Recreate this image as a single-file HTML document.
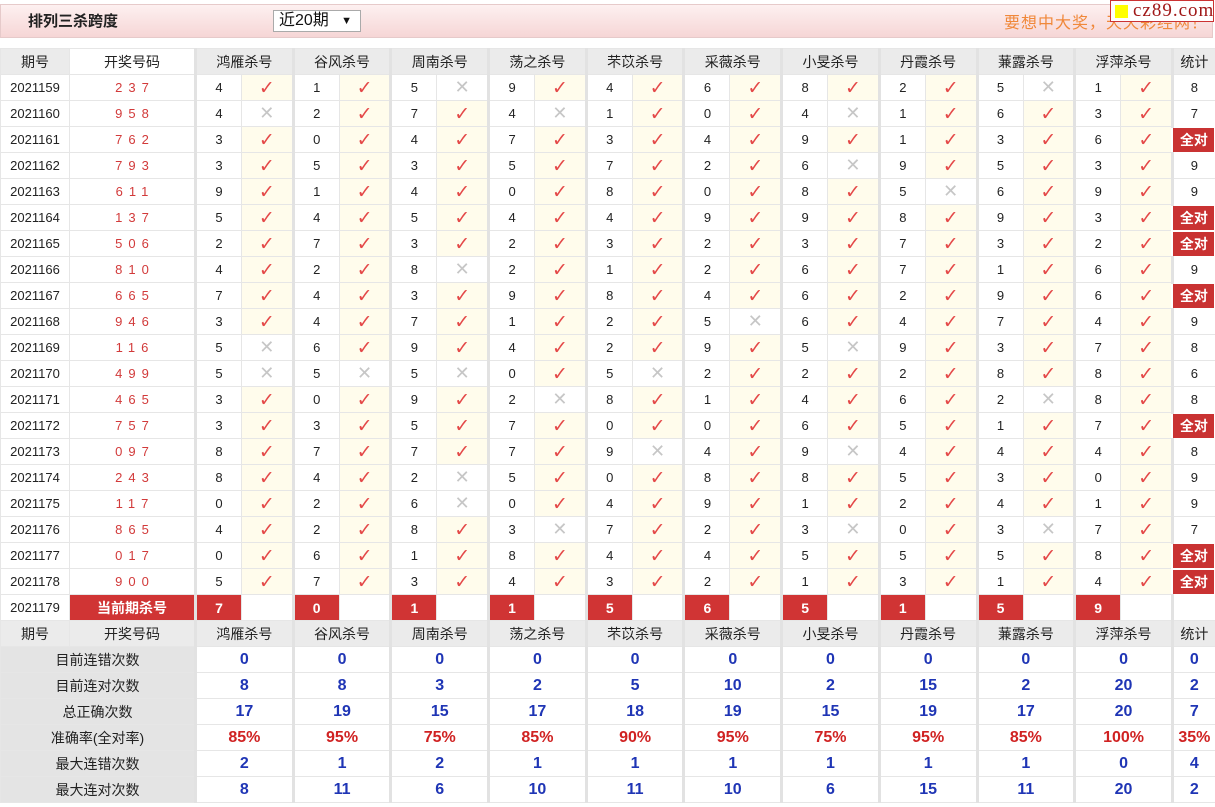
<!DOCTYPE html>
<html><head><meta charset="utf-8">
<style>
*{margin:0;padding:0;box-sizing:border-box}
body{width:1215px;height:807px;background:#fff;font-family:"Liberation Sans","Noto Sans CJK SC",sans-serif;position:relative;overflow:hidden}
.bar{position:absolute;left:0;top:4px;width:1213px;height:34px;background:linear-gradient(#fdf0f0,#f6d6d6);border:1px solid #e6caca}
.title{position:absolute;left:27px;top:5px;font-size:15px;font-weight:bold;color:#222}
.sel{position:absolute;left:272px;top:5px;width:88px;height:22px;background:#fff;border:1px solid #aaa;font-size:16px;padding-left:5px;line-height:20px;color:#111}
.sel span{position:absolute;right:8px;font-size:11px}
.slogan{position:absolute;right:4px;top:4px;color:#f0883a;font-size:16px;letter-spacing:1px}
.logo{position:absolute;left:1110px;top:0;width:104px;height:22px;background:#fff;border:1px solid #c33;font-family:"Liberation Serif",serif;font-size:19px;color:#a01818;line-height:20px;padding-left:22px;letter-spacing:1px}
.logo i{position:absolute;left:4px;top:4px;width:13px;height:13px;background:#ff0}
table{position:absolute;left:0;top:48px;width:1215px;border-collapse:collapse;table-layout:fixed;font-size:13px}
td{height:26px;border:1px solid #e6e6e6;text-align:center;color:#222;padding:0;white-space:nowrap}
tr.h td{background:#ebebeb;font-size:14px;color:#222}
td.g{border-left:3px solid #e2e2e2}
td.k{color:#d23a3a;letter-spacing:6px;padding-left:6px}
td.y{background:#fffcec;color:#e44848;font-family:"DejaVu Sans",sans-serif;font-size:19px;line-height:20px}
td.x{background:#fff;color:#c6c6c6;font-family:"DejaVu Sans",sans-serif;font-size:18px}
td.a{background:#c93232;color:#fff;font-size:14px;font-weight:bold;border:2px solid #fff}
td.r{background:#d03434;color:#fff;font-weight:bold;font-size:14px}
tr.s td{font-weight:bold;color:#1f35b5;font-size:16px}
tr.s td.l{background:#e4e4e4;color:#222;font-weight:normal;font-size:14px}
tr.p td{color:#d02222}
</style></head><body>
<div class="bar"><div class="title">排列三杀跨度</div><div class="sel">近20期<span>▼</span></div><div class="slogan">要想中大奖，天天彩经网！</div></div>
<div class="logo"><i></i>cz89.com</div>
<table>
<colgroup><col style="width:69px"><col style="width:126px">
<col style="width:46px"><col style="width:51.7px"><col style="width:46px"><col style="width:51.7px"><col style="width:46px"><col style="width:51.7px"><col style="width:46px"><col style="width:51.7px"><col style="width:46px"><col style="width:51.7px"><col style="width:46px"><col style="width:51.7px"><col style="width:46px"><col style="width:51.7px"><col style="width:46px"><col style="width:51.7px"><col style="width:46px"><col style="width:51.7px"><col style="width:46px"><col style="width:51.7px">
<col style="width:43px"></colgroup>
<tr class="h"><td>期号</td><td style="background:#fff">开奖号码</td><td class="g" colspan="2">鸿雁杀号</td><td class="g" colspan="2">谷风杀号</td><td class="g" colspan="2">周南杀号</td><td class="g" colspan="2">荡之杀号</td><td class="g" colspan="2">芣苡杀号</td><td class="g" colspan="2">采薇杀号</td><td class="g" colspan="2">小旻杀号</td><td class="g" colspan="2">丹霞杀号</td><td class="g" colspan="2">蒹露杀号</td><td class="g" colspan="2">浮萍杀号</td><td class="g">统计</td></tr>
<tr><td>2021159</td><td class="k">237</td><td class="g">4</td><td class="y">✓</td><td class="g">1</td><td class="y">✓</td><td class="g">5</td><td class="x">✕</td><td class="g">9</td><td class="y">✓</td><td class="g">4</td><td class="y">✓</td><td class="g">6</td><td class="y">✓</td><td class="g">8</td><td class="y">✓</td><td class="g">2</td><td class="y">✓</td><td class="g">5</td><td class="x">✕</td><td class="g">1</td><td class="y">✓</td><td class="g">8</td></tr>
<tr><td>2021160</td><td class="k">958</td><td class="g">4</td><td class="x">✕</td><td class="g">2</td><td class="y">✓</td><td class="g">7</td><td class="y">✓</td><td class="g">4</td><td class="x">✕</td><td class="g">1</td><td class="y">✓</td><td class="g">0</td><td class="y">✓</td><td class="g">4</td><td class="x">✕</td><td class="g">1</td><td class="y">✓</td><td class="g">6</td><td class="y">✓</td><td class="g">3</td><td class="y">✓</td><td class="g">7</td></tr>
<tr><td>2021161</td><td class="k">762</td><td class="g">3</td><td class="y">✓</td><td class="g">0</td><td class="y">✓</td><td class="g">4</td><td class="y">✓</td><td class="g">7</td><td class="y">✓</td><td class="g">3</td><td class="y">✓</td><td class="g">4</td><td class="y">✓</td><td class="g">9</td><td class="y">✓</td><td class="g">1</td><td class="y">✓</td><td class="g">3</td><td class="y">✓</td><td class="g">6</td><td class="y">✓</td><td class="a">全对</td></tr>
<tr><td>2021162</td><td class="k">793</td><td class="g">3</td><td class="y">✓</td><td class="g">5</td><td class="y">✓</td><td class="g">3</td><td class="y">✓</td><td class="g">5</td><td class="y">✓</td><td class="g">7</td><td class="y">✓</td><td class="g">2</td><td class="y">✓</td><td class="g">6</td><td class="x">✕</td><td class="g">9</td><td class="y">✓</td><td class="g">5</td><td class="y">✓</td><td class="g">3</td><td class="y">✓</td><td class="g">9</td></tr>
<tr><td>2021163</td><td class="k">611</td><td class="g">9</td><td class="y">✓</td><td class="g">1</td><td class="y">✓</td><td class="g">4</td><td class="y">✓</td><td class="g">0</td><td class="y">✓</td><td class="g">8</td><td class="y">✓</td><td class="g">0</td><td class="y">✓</td><td class="g">8</td><td class="y">✓</td><td class="g">5</td><td class="x">✕</td><td class="g">6</td><td class="y">✓</td><td class="g">9</td><td class="y">✓</td><td class="g">9</td></tr>
<tr><td>2021164</td><td class="k">137</td><td class="g">5</td><td class="y">✓</td><td class="g">4</td><td class="y">✓</td><td class="g">5</td><td class="y">✓</td><td class="g">4</td><td class="y">✓</td><td class="g">4</td><td class="y">✓</td><td class="g">9</td><td class="y">✓</td><td class="g">9</td><td class="y">✓</td><td class="g">8</td><td class="y">✓</td><td class="g">9</td><td class="y">✓</td><td class="g">3</td><td class="y">✓</td><td class="a">全对</td></tr>
<tr><td>2021165</td><td class="k">506</td><td class="g">2</td><td class="y">✓</td><td class="g">7</td><td class="y">✓</td><td class="g">3</td><td class="y">✓</td><td class="g">2</td><td class="y">✓</td><td class="g">3</td><td class="y">✓</td><td class="g">2</td><td class="y">✓</td><td class="g">3</td><td class="y">✓</td><td class="g">7</td><td class="y">✓</td><td class="g">3</td><td class="y">✓</td><td class="g">2</td><td class="y">✓</td><td class="a">全对</td></tr>
<tr><td>2021166</td><td class="k">810</td><td class="g">4</td><td class="y">✓</td><td class="g">2</td><td class="y">✓</td><td class="g">8</td><td class="x">✕</td><td class="g">2</td><td class="y">✓</td><td class="g">1</td><td class="y">✓</td><td class="g">2</td><td class="y">✓</td><td class="g">6</td><td class="y">✓</td><td class="g">7</td><td class="y">✓</td><td class="g">1</td><td class="y">✓</td><td class="g">6</td><td class="y">✓</td><td class="g">9</td></tr>
<tr><td>2021167</td><td class="k">665</td><td class="g">7</td><td class="y">✓</td><td class="g">4</td><td class="y">✓</td><td class="g">3</td><td class="y">✓</td><td class="g">9</td><td class="y">✓</td><td class="g">8</td><td class="y">✓</td><td class="g">4</td><td class="y">✓</td><td class="g">6</td><td class="y">✓</td><td class="g">2</td><td class="y">✓</td><td class="g">9</td><td class="y">✓</td><td class="g">6</td><td class="y">✓</td><td class="a">全对</td></tr>
<tr><td>2021168</td><td class="k">946</td><td class="g">3</td><td class="y">✓</td><td class="g">4</td><td class="y">✓</td><td class="g">7</td><td class="y">✓</td><td class="g">1</td><td class="y">✓</td><td class="g">2</td><td class="y">✓</td><td class="g">5</td><td class="x">✕</td><td class="g">6</td><td class="y">✓</td><td class="g">4</td><td class="y">✓</td><td class="g">7</td><td class="y">✓</td><td class="g">4</td><td class="y">✓</td><td class="g">9</td></tr>
<tr><td>2021169</td><td class="k">116</td><td class="g">5</td><td class="x">✕</td><td class="g">6</td><td class="y">✓</td><td class="g">9</td><td class="y">✓</td><td class="g">4</td><td class="y">✓</td><td class="g">2</td><td class="y">✓</td><td class="g">9</td><td class="y">✓</td><td class="g">5</td><td class="x">✕</td><td class="g">9</td><td class="y">✓</td><td class="g">3</td><td class="y">✓</td><td class="g">7</td><td class="y">✓</td><td class="g">8</td></tr>
<tr><td>2021170</td><td class="k">499</td><td class="g">5</td><td class="x">✕</td><td class="g">5</td><td class="x">✕</td><td class="g">5</td><td class="x">✕</td><td class="g">0</td><td class="y">✓</td><td class="g">5</td><td class="x">✕</td><td class="g">2</td><td class="y">✓</td><td class="g">2</td><td class="y">✓</td><td class="g">2</td><td class="y">✓</td><td class="g">8</td><td class="y">✓</td><td class="g">8</td><td class="y">✓</td><td class="g">6</td></tr>
<tr><td>2021171</td><td class="k">465</td><td class="g">3</td><td class="y">✓</td><td class="g">0</td><td class="y">✓</td><td class="g">9</td><td class="y">✓</td><td class="g">2</td><td class="x">✕</td><td class="g">8</td><td class="y">✓</td><td class="g">1</td><td class="y">✓</td><td class="g">4</td><td class="y">✓</td><td class="g">6</td><td class="y">✓</td><td class="g">2</td><td class="x">✕</td><td class="g">8</td><td class="y">✓</td><td class="g">8</td></tr>
<tr><td>2021172</td><td class="k">757</td><td class="g">3</td><td class="y">✓</td><td class="g">3</td><td class="y">✓</td><td class="g">5</td><td class="y">✓</td><td class="g">7</td><td class="y">✓</td><td class="g">0</td><td class="y">✓</td><td class="g">0</td><td class="y">✓</td><td class="g">6</td><td class="y">✓</td><td class="g">5</td><td class="y">✓</td><td class="g">1</td><td class="y">✓</td><td class="g">7</td><td class="y">✓</td><td class="a">全对</td></tr>
<tr><td>2021173</td><td class="k">097</td><td class="g">8</td><td class="y">✓</td><td class="g">7</td><td class="y">✓</td><td class="g">7</td><td class="y">✓</td><td class="g">7</td><td class="y">✓</td><td class="g">9</td><td class="x">✕</td><td class="g">4</td><td class="y">✓</td><td class="g">9</td><td class="x">✕</td><td class="g">4</td><td class="y">✓</td><td class="g">4</td><td class="y">✓</td><td class="g">4</td><td class="y">✓</td><td class="g">8</td></tr>
<tr><td>2021174</td><td class="k">243</td><td class="g">8</td><td class="y">✓</td><td class="g">4</td><td class="y">✓</td><td class="g">2</td><td class="x">✕</td><td class="g">5</td><td class="y">✓</td><td class="g">0</td><td class="y">✓</td><td class="g">8</td><td class="y">✓</td><td class="g">8</td><td class="y">✓</td><td class="g">5</td><td class="y">✓</td><td class="g">3</td><td class="y">✓</td><td class="g">0</td><td class="y">✓</td><td class="g">9</td></tr>
<tr><td>2021175</td><td class="k">117</td><td class="g">0</td><td class="y">✓</td><td class="g">2</td><td class="y">✓</td><td class="g">6</td><td class="x">✕</td><td class="g">0</td><td class="y">✓</td><td class="g">4</td><td class="y">✓</td><td class="g">9</td><td class="y">✓</td><td class="g">1</td><td class="y">✓</td><td class="g">2</td><td class="y">✓</td><td class="g">4</td><td class="y">✓</td><td class="g">1</td><td class="y">✓</td><td class="g">9</td></tr>
<tr><td>2021176</td><td class="k">865</td><td class="g">4</td><td class="y">✓</td><td class="g">2</td><td class="y">✓</td><td class="g">8</td><td class="y">✓</td><td class="g">3</td><td class="x">✕</td><td class="g">7</td><td class="y">✓</td><td class="g">2</td><td class="y">✓</td><td class="g">3</td><td class="x">✕</td><td class="g">0</td><td class="y">✓</td><td class="g">3</td><td class="x">✕</td><td class="g">7</td><td class="y">✓</td><td class="g">7</td></tr>
<tr><td>2021177</td><td class="k">017</td><td class="g">0</td><td class="y">✓</td><td class="g">6</td><td class="y">✓</td><td class="g">1</td><td class="y">✓</td><td class="g">8</td><td class="y">✓</td><td class="g">4</td><td class="y">✓</td><td class="g">4</td><td class="y">✓</td><td class="g">5</td><td class="y">✓</td><td class="g">5</td><td class="y">✓</td><td class="g">5</td><td class="y">✓</td><td class="g">8</td><td class="y">✓</td><td class="a">全对</td></tr>
<tr><td>2021178</td><td class="k">900</td><td class="g">5</td><td class="y">✓</td><td class="g">7</td><td class="y">✓</td><td class="g">3</td><td class="y">✓</td><td class="g">4</td><td class="y">✓</td><td class="g">3</td><td class="y">✓</td><td class="g">2</td><td class="y">✓</td><td class="g">1</td><td class="y">✓</td><td class="g">3</td><td class="y">✓</td><td class="g">1</td><td class="y">✓</td><td class="g">4</td><td class="y">✓</td><td class="a">全对</td></tr>
<tr><td>2021179</td><td class="r">当前期杀号</td><td class="g r">7</td><td></td><td class="g r">0</td><td></td><td class="g r">1</td><td></td><td class="g r">1</td><td></td><td class="g r">5</td><td></td><td class="g r">6</td><td></td><td class="g r">5</td><td></td><td class="g r">1</td><td></td><td class="g r">5</td><td></td><td class="g r">9</td><td></td><td class="g"></td></tr>
<tr class="h"><td>期号</td><td>开奖号码</td><td class="g" colspan="2">鸿雁杀号</td><td class="g" colspan="2">谷风杀号</td><td class="g" colspan="2">周南杀号</td><td class="g" colspan="2">荡之杀号</td><td class="g" colspan="2">芣苡杀号</td><td class="g" colspan="2">采薇杀号</td><td class="g" colspan="2">小旻杀号</td><td class="g" colspan="2">丹霞杀号</td><td class="g" colspan="2">蒹露杀号</td><td class="g" colspan="2">浮萍杀号</td><td class="g">统计</td></tr>
<tr class="s"><td class="l" colspan="2">目前连错次数</td><td class="g" colspan="2">0</td><td class="g" colspan="2">0</td><td class="g" colspan="2">0</td><td class="g" colspan="2">0</td><td class="g" colspan="2">0</td><td class="g" colspan="2">0</td><td class="g" colspan="2">0</td><td class="g" colspan="2">0</td><td class="g" colspan="2">0</td><td class="g" colspan="2">0</td><td class="g">0</td></tr>
<tr class="s"><td class="l" colspan="2">目前连对次数</td><td class="g" colspan="2">8</td><td class="g" colspan="2">8</td><td class="g" colspan="2">3</td><td class="g" colspan="2">2</td><td class="g" colspan="2">5</td><td class="g" colspan="2">10</td><td class="g" colspan="2">2</td><td class="g" colspan="2">15</td><td class="g" colspan="2">2</td><td class="g" colspan="2">20</td><td class="g">2</td></tr>
<tr class="s"><td class="l" colspan="2">总正确次数</td><td class="g" colspan="2">17</td><td class="g" colspan="2">19</td><td class="g" colspan="2">15</td><td class="g" colspan="2">17</td><td class="g" colspan="2">18</td><td class="g" colspan="2">19</td><td class="g" colspan="2">15</td><td class="g" colspan="2">19</td><td class="g" colspan="2">17</td><td class="g" colspan="2">20</td><td class="g">7</td></tr>
<tr class="s p"><td class="l" colspan="2">准确率(全对率)</td><td class="g" colspan="2">85%</td><td class="g" colspan="2">95%</td><td class="g" colspan="2">75%</td><td class="g" colspan="2">85%</td><td class="g" colspan="2">90%</td><td class="g" colspan="2">95%</td><td class="g" colspan="2">75%</td><td class="g" colspan="2">95%</td><td class="g" colspan="2">85%</td><td class="g" colspan="2">100%</td><td class="g">35%</td></tr>
<tr class="s"><td class="l" colspan="2">最大连错次数</td><td class="g" colspan="2">2</td><td class="g" colspan="2">1</td><td class="g" colspan="2">2</td><td class="g" colspan="2">1</td><td class="g" colspan="2">1</td><td class="g" colspan="2">1</td><td class="g" colspan="2">1</td><td class="g" colspan="2">1</td><td class="g" colspan="2">1</td><td class="g" colspan="2">0</td><td class="g">4</td></tr>
<tr class="s"><td class="l" colspan="2">最大连对次数</td><td class="g" colspan="2">8</td><td class="g" colspan="2">11</td><td class="g" colspan="2">6</td><td class="g" colspan="2">10</td><td class="g" colspan="2">11</td><td class="g" colspan="2">10</td><td class="g" colspan="2">6</td><td class="g" colspan="2">15</td><td class="g" colspan="2">11</td><td class="g" colspan="2">20</td><td class="g">2</td></tr>
</table>
</body></html>
